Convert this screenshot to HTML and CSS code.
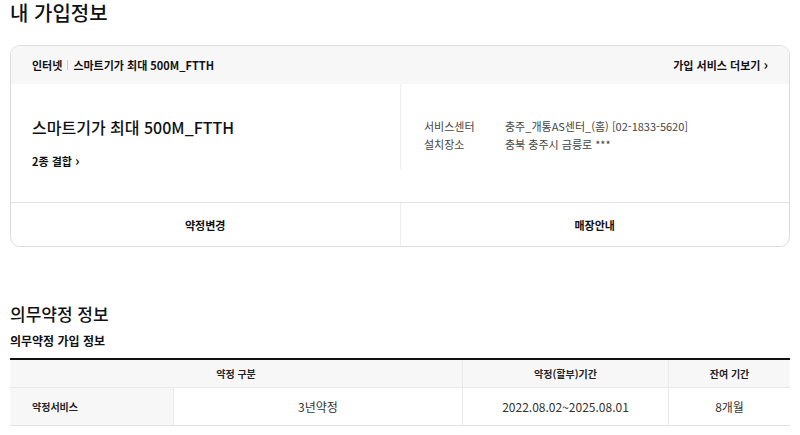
FILE: index.html
```html
<!DOCTYPE html>
<html lang="ko">
<head>
  <meta charset="UTF-8">
  <title>내 가입정보</title>
  <link rel="stylesheet" href="styles.css">
</head>
<body>
  <h1 class="page-title">내 가입정보</h1>

  <div class="card">
    <div class="card-head">
      <div class="crumb">
        <span>인터넷</span>
        <span class="bar"></span>
        <span>스마트기가 최대 500M_FTTH</span>
      </div>
      <a class="more" href="#">가입 서비스 더보기 <span class="chev">&#8250;</span></a>
    </div>
    <div class="card-body">
      <div class="plan">
        <div class="plan-name">스마트기가 최대 500M_FTTH</div>
        <a class="combo" href="#">2종 결합 <span class="chev">&#8250;</span></a>
      </div>
      <div class="info">
        <div class="info-row"><span class="label">서비스센터</span><span>충주_개통AS센터_(홈) [02-1833-5620]</span></div>
        <div class="info-row"><span class="label">설치장소</span><span>충북 충주시 금릉로 ***</span></div>
      </div>
    </div>
    <div class="card-actions">
      <a href="#">약정변경</a>
      <a href="#">매장안내</a>
    </div>
  </div>

  <h2 class="section-title">의무약정 정보</h2>
  <h3 class="sub-title">의무약정 가입 정보</h3>
  <table class="contract">
    <thead>
      <tr>
        <th colspan="2">약정 구분</th>
        <th class="c3">약정(할부)기간</th>
        <th class="c4">잔여 기간</th>
      </tr>
    </thead>
    <tbody>
      <tr>
        <th class="c1">약정서비스</th>
        <td class="c2">3년약정</td>
        <td>2022.08.02~2025.08.01</td>
        <td>8개월</td>
      </tr>
    </tbody>
  </table>
</body>
</html>
```

FILE: styles.css
```css
body {
  margin: 0;
  padding: 0 10px;
  font-family: "Noto Sans CJK KR", "Noto Sans", sans-serif;
  color: #111;
  background: #fff;
}
a {
  color: inherit;
  text-decoration: none;
}
.page-title {
  margin: 0;
  padding-top: 1px;
  font-size: 20px;
  font-weight: 500;
  line-height: 24px;
}
.card {
  margin-top: 20px;
  border: 1px solid #dcdcdc;
  border-radius: 10px;
  overflow: hidden;
}
.card-head {
  display: flex;
  justify-content: space-between;
  align-items: center;
  height: 38px;
  padding: 0 21px;
  background: #f7f7f7;
  font-size: 11px;
  font-weight: 700;
}
.crumb {
  display: flex;
  align-items: center;
  gap: 5px;
}
.bar {
  width: 1px;
  height: 10px;
  background: #ccc;
}
.chev {
  font-size: 14px;
  font-weight: 700;
  line-height: 1;
}
.card-body {
  display: flex;
  height: 118px;
  border-bottom: 1px solid #e2e2e2;
}
.plan {
  width: 368px;
  padding: 32px 0 0 21px;
  border-right: 1px solid #eee;
  margin-bottom: 33px;
}
.plan-name {
  font-size: 16px;
  font-weight: 500;
  line-height: 22px;
}
.combo {
  display: inline-block;
  margin-top: 15px;
  font-size: 11px;
  font-weight: 700;
}
.info {
  padding: 33px 0 0 23px;
  font-size: 11px;
  color: #444;
}
.info-row {
  line-height: 18px;
}
.label {
  display: inline-block;
  width: 81px;
}
.card-actions {
  display: flex;
  height: 43px;
}
.card-actions a {
  flex: 1;
  display: flex;
  align-items: center;
  justify-content: center;
  font-size: 11px;
  font-weight: 700;
}
.card-actions a + a {
  border-left: 1px solid #eee;
}
.section-title {
  margin: 56px 0 0;
  font-size: 17px;
  font-weight: 500;
  line-height: 22px;
}
.sub-title {
  margin: 8px 0 0;
  font-size: 12px;
  font-weight: 700;
  line-height: 16px;
}
.contract {
  width: 100%;
  margin-top: 9px;
  border-collapse: collapse;
  border-top: 2px solid #111;
  font-size: 10px;
  color: #222;
}
.contract th,
.contract td {
  padding: 0;
}
.contract thead th {
  height: 27px;
  background: #f7f7f7;
  font-weight: 700;
  border-bottom: 1px solid #eaeaea;
  border-left: 1px solid #eaeaea;
}
.contract thead th:first-child {
  border-left: 0;
}
.contract tbody td,
.contract tbody th {
  height: 37px;
  border-bottom: 1px solid #e2e2e2;
  border-left: 1px solid #eaeaea;
  text-align: center;
  font-size: 12px;
  font-weight: 400;
  color: #333;
}
.contract tbody .c1 {
  width: 141px;
  padding-left: 22px;
  text-align: left;
  background: #f7f7f7;
  border-left: 0;
  font-size: 10px;
  font-weight: 700;
  color: #222;
}
.contract .c2 {
  width: 288px;
}
.contract .c3 {
  width: 205px;
}
```
